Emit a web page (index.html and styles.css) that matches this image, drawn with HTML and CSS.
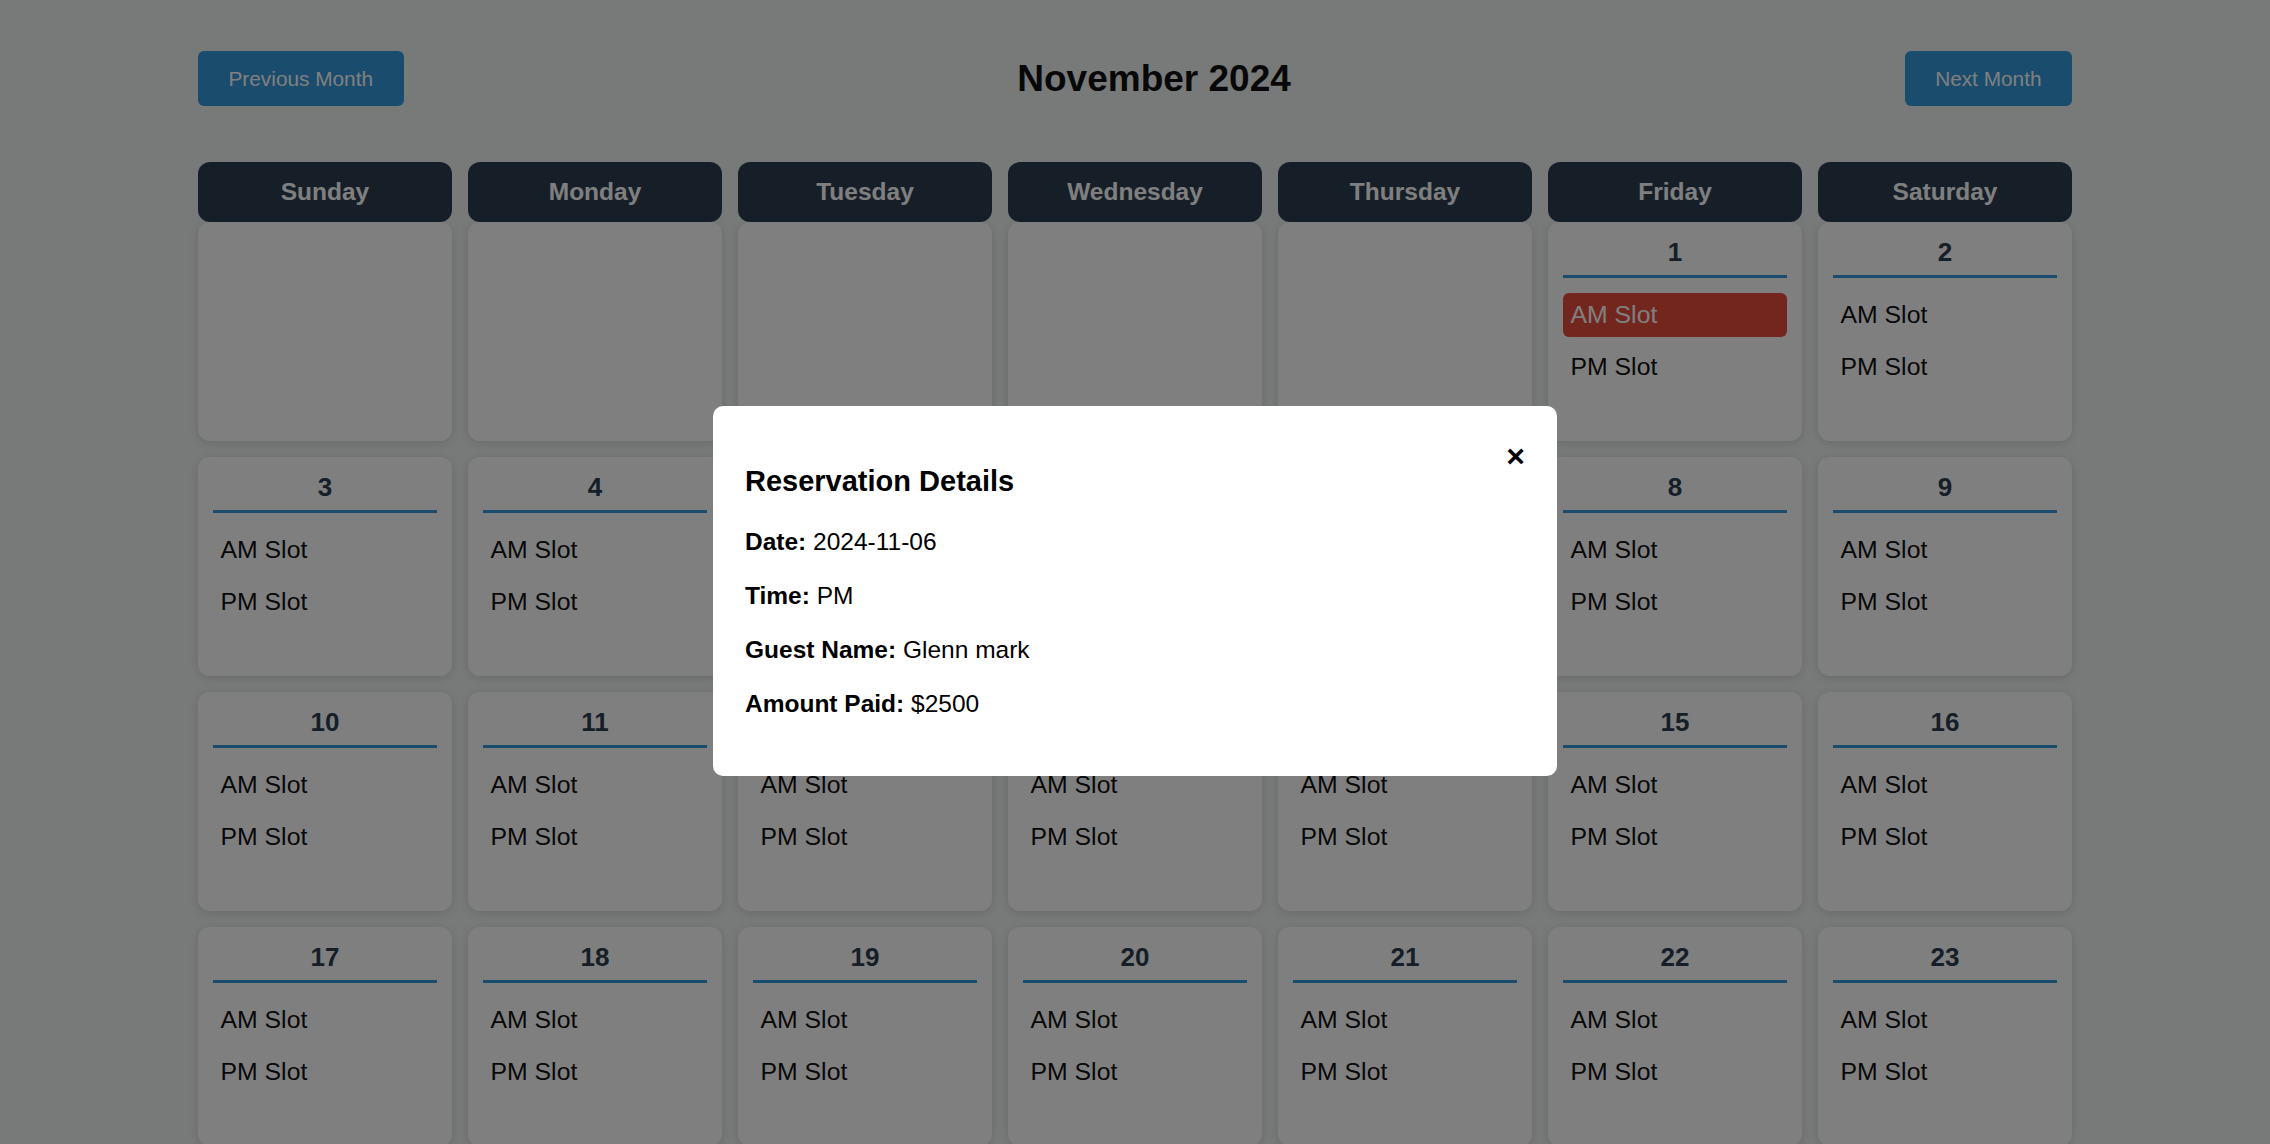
FILE: index.html
```html
<!DOCTYPE html>
<html lang="en">
<head>
<meta charset="utf-8">
<title>Reservation Calendar</title>
<link rel="stylesheet" href="styles.css">
</head>
<body>
<div class="page">
  <div class="topbar">
    <button class="btn">Previous Month</button>
    <h2 class="title">November 2024</h2>
    <button class="btn">Next Month</button>
  </div>

  <div class="weekdays">
    <div class="weekday">Sunday</div>
    <div class="weekday">Monday</div>
    <div class="weekday">Tuesday</div>
    <div class="weekday">Wednesday</div>
    <div class="weekday">Thursday</div>
    <div class="weekday">Friday</div>
    <div class="weekday">Saturday</div>
  </div>

  <div class="days">
    <div class="day"></div>
    <div class="day"></div>
    <div class="day"></div>
    <div class="day"></div>
    <div class="day"></div>
    <div class="day"><div class="num">1</div><div class="slot booked">AM Slot</div><div class="slot">PM Slot</div></div>
    <div class="day"><div class="num">2</div><div class="slot">AM Slot</div><div class="slot">PM Slot</div></div>

    <div class="day"><div class="num">3</div><div class="slot">AM Slot</div><div class="slot">PM Slot</div></div>
    <div class="day"><div class="num">4</div><div class="slot">AM Slot</div><div class="slot">PM Slot</div></div>
    <div class="day"><div class="num">5</div><div class="slot">AM Slot</div><div class="slot">PM Slot</div></div>
    <div class="day"><div class="num">6</div><div class="slot">AM Slot</div><div class="slot booked">PM Slot</div></div>
    <div class="day"><div class="num">7</div><div class="slot">AM Slot</div><div class="slot">PM Slot</div></div>
    <div class="day"><div class="num">8</div><div class="slot">AM Slot</div><div class="slot">PM Slot</div></div>
    <div class="day"><div class="num">9</div><div class="slot">AM Slot</div><div class="slot">PM Slot</div></div>

    <div class="day"><div class="num">10</div><div class="slot">AM Slot</div><div class="slot">PM Slot</div></div>
    <div class="day"><div class="num">11</div><div class="slot">AM Slot</div><div class="slot">PM Slot</div></div>
    <div class="day"><div class="num">12</div><div class="slot">AM Slot</div><div class="slot">PM Slot</div></div>
    <div class="day"><div class="num">13</div><div class="slot">AM Slot</div><div class="slot">PM Slot</div></div>
    <div class="day"><div class="num">14</div><div class="slot">AM Slot</div><div class="slot">PM Slot</div></div>
    <div class="day"><div class="num">15</div><div class="slot">AM Slot</div><div class="slot">PM Slot</div></div>
    <div class="day"><div class="num">16</div><div class="slot">AM Slot</div><div class="slot">PM Slot</div></div>

    <div class="day"><div class="num">17</div><div class="slot">AM Slot</div><div class="slot">PM Slot</div></div>
    <div class="day"><div class="num">18</div><div class="slot">AM Slot</div><div class="slot">PM Slot</div></div>
    <div class="day"><div class="num">19</div><div class="slot">AM Slot</div><div class="slot">PM Slot</div></div>
    <div class="day"><div class="num">20</div><div class="slot">AM Slot</div><div class="slot">PM Slot</div></div>
    <div class="day"><div class="num">21</div><div class="slot">AM Slot</div><div class="slot">PM Slot</div></div>
    <div class="day"><div class="num">22</div><div class="slot">AM Slot</div><div class="slot">PM Slot</div></div>
    <div class="day"><div class="num">23</div><div class="slot">AM Slot</div><div class="slot">PM Slot</div></div>

    <div class="day"><div class="num">24</div><div class="slot">AM Slot</div><div class="slot">PM Slot</div></div>
    <div class="day"><div class="num">25</div><div class="slot">AM Slot</div><div class="slot">PM Slot</div></div>
    <div class="day"><div class="num">26</div><div class="slot">AM Slot</div><div class="slot">PM Slot</div></div>
    <div class="day"><div class="num">27</div><div class="slot">AM Slot</div><div class="slot">PM Slot</div></div>
    <div class="day"><div class="num">28</div><div class="slot">AM Slot</div><div class="slot">PM Slot</div></div>
    <div class="day"><div class="num">29</div><div class="slot">AM Slot</div><div class="slot">PM Slot</div></div>
    <div class="day"><div class="num">30</div><div class="slot">AM Slot</div><div class="slot">PM Slot</div></div>
  </div>
</div>

<div class="overlay">
  <div class="modal">
    <span class="close">&times;</span>
    <h3 class="modal-title">Reservation Details</h3>
    <p class="detail"><strong>Date:</strong> 2024-11-06</p>
    <p class="detail"><strong>Time:</strong> PM</p>
    <p class="detail"><strong>Guest Name:</strong> Glenn mark</p>
    <p class="detail"><strong>Amount Paid:</strong> $2500</p>
  </div>
</div>
</body>
</html>
```

FILE: styles.css
```css
html, body {
  margin: 0;
  padding: 0;
}

body {
  background: #f0f3f2;
  font-family: "Liberation Sans", Arial, sans-serif;
  font-size: 24.5px;
  color: #222;
}

.page {
  width: 1874px;
  margin: 0 auto;
  padding-top: 51px;
}

.topbar {
  display: flex;
  justify-content: space-between;
  align-items: center;
  height: 55px;
  margin-bottom: 56px;
}

.btn {
  height: 55px;
  padding: 0 30.5px;
  border: none;
  border-radius: 6px;
  background: #3498db;
  color: #fff;
  font-family: "Liberation Sans", Arial, sans-serif;
  font-size: 20.8px;
  cursor: pointer;
}

.title {
  margin: 0;
  font-size: 37px;
  font-weight: bold;
  color: #111;
}

.weekdays {
  display: grid;
  grid-template-columns: repeat(7, 1fr);
  column-gap: 16px;
}

.weekday {
  background: #2c3e50;
  color: #fff;
  font-weight: bold;
  font-size: 24.5px;
  line-height: 29.5px;
  padding: 15px 0;
  text-align: center;
  border-radius: 12px;
}

.days {
  display: grid;
  grid-template-columns: repeat(7, 1fr);
  gap: 16px;
}

.day {
  background: #fff;
  border-radius: 12px;
  padding: 15px;
  min-height: 219px;
  box-sizing: border-box;
  box-shadow: 0 2px 10px rgba(0, 0, 0, 0.12);
}

.num {
  text-align: center;
  font-size: 26px;
  font-weight: bold;
  color: #2c3e50;
  line-height: 30px;
  padding-bottom: 8px;
  border-bottom: 3px solid #3498db;
  margin-bottom: 15px;
}

.slot {
  font-size: 24.8px;
  line-height: 28.5px;
  padding: 8px 7.5px;
  border-radius: 6px;
  margin-bottom: 7.5px;
  color: #111;
}

.slot.booked {
  background: #e74c3c;
  color: #fff;
}

.overlay {
  position: fixed;
  inset: 0;
  background: rgba(0, 0, 0, 0.5);
  display: flex;
  justify-content: center;
  align-items: flex-start;
}

.modal {
  width: 844px;
  margin-top: 406px;
  box-sizing: border-box;
  background: #fff;
  border-radius: 10px;
  padding: 30px 32px 33px;
  color: #000;
}

.close {
  float: right;
  margin-top: 2px;
  font-size: 32px;
  font-weight: bold;
  color: #000;
  cursor: pointer;
}

.modal-title {
  font-size: 29px;
  font-weight: bold;
  margin: 29px 0;
}

.detail {
  font-size: 24.5px;
  line-height: 29px;
  margin: 25px 0;
}
```
